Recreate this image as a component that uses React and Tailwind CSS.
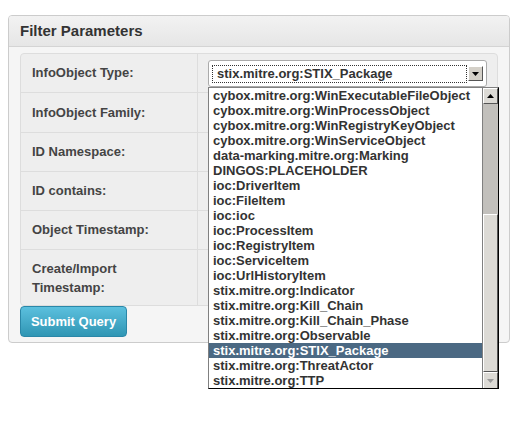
import React from "react";

const options = [
  "cybox.mitre.org:WinExecutableFileObject",
  "cybox.mitre.org:WinProcessObject",
  "cybox.mitre.org:WinRegistryKeyObject",
  "cybox.mitre.org:WinServiceObject",
  "data-marking.mitre.org:Marking",
  "DINGOS:PLACEHOLDER",
  "ioc:DriverItem",
  "ioc:FileItem",
  "ioc:ioc",
  "ioc:ProcessItem",
  "ioc:RegistryItem",
  "ioc:ServiceItem",
  "ioc:UrlHistoryItem",
  "stix.mitre.org:Indicator",
  "stix.mitre.org:Kill_Chain",
  "stix.mitre.org:Kill_Chain_Phase",
  "stix.mitre.org:Observable",
  "stix.mitre.org:STIX_Package",
  "stix.mitre.org:ThreatActor",
  "stix.mitre.org:TTP",
];

const rows = [
  { label: "InfoObject Type:", h: "h-[39px]" },
  { label: "InfoObject Family:", h: "h-[40px]" },
  { label: "ID Namespace:", h: "h-[39px]" },
  { label: "ID contains:", h: "h-[39px]" },
  { label: "Object Timestamp:", h: "h-[39px]" },
];

function Row({ label, h, children }) {
  return (
    <div className={`flex ${h} border-b border-[#dddddd]`}>
      <div className="w-[177px] shrink-0 border-r border-[#dddddd] flex items-center pl-[11px] text-[13px] font-bold text-[#444]">
        {label}
      </div>
      <div className="flex-1 pl-[10px] pt-[6px]">{children}</div>
    </div>
  );
}

export default function App() {
  return (
    <div className="relative w-[519px] h-[432px] bg-white pt-[15px] pl-[8px] font-['Liberation_Sans',Arial,sans-serif]">
      <div className="w-[502px] h-[328px] border border-[#cccccc] rounded-[4px] bg-[#f5f5f5] overflow-hidden">
        <div className="h-[31px] border-b border-[#d4d4d4] bg-gradient-to-b from-[#f2f2f2] to-[#e6e6e6] flex items-center pl-[11px] text-[15px] font-bold text-[#333]">
          Filter Parameters
        </div>
        <div className="pl-[11px] pt-[6px]">
          <div className="w-[478px] border border-[#dddddd] rounded-[4px] bg-[#eeeeee]">
            {rows.map((r, i) => (
              <Row key={i} label={r.label} h={r.h}>
                {i === 0 && (
                  <div className="w-[279px] h-[27px] border border-[#aaaaaa] rounded-[3px] bg-white flex items-center pl-[3px] pr-[3px]">
                    <div className="flex-1 h-[18px] border border-dotted border-[#333] flex items-center pl-[4px] text-[13px] font-bold text-[#333] leading-none">
                      stix.mitre.org:STIX_Package
                    </div>
                    <div className="w-[15px] h-[15px] ml-[1px] bg-[#d4d0c8] border-t border-l border-t-white border-l-white border-r border-b border-r-[#555] border-b-[#555] flex items-center justify-center">
                      <svg width="7" height="4" viewBox="0 0 7 4">
                        <polygon points="0,0 7,0 3.5,4" fill="#000" />
                      </svg>
                    </div>
                  </div>
                )}
              </Row>
            ))}
            <div className="flex h-[55px]">
              <div className="w-[177px] shrink-0 border-r border-[#dddddd] flex items-center pl-[11px] text-[13px] font-bold text-[#444] leading-[19px]">
                Create/Import
                <br />
                Timestamp:
              </div>
              <div className="flex-1" />
            </div>
          </div>
          <button className="w-[107px] h-[31px] rounded-[4px] border border-[#2a87a8] bg-gradient-to-b from-[#5bc0de] to-[#2f96b4] text-white text-[13px] font-bold flex items-center justify-center">
            Submit Query
          </button>
        </div>
      </div>

      <div className="absolute left-[208px] top-[87px] w-[291px] h-[302px] bg-white border-t border-l border-t-[#808080] border-l-[#808080] border-r border-b border-r-black border-b-black flex">
        <div className="flex-1 flex flex-col">
          {options.map((o) => (
            <div
              key={o}
              className={`h-[15px] pl-[4px] text-[13px] font-bold leading-[15px] whitespace-nowrap ${
                o === "stix.mitre.org:STIX_Package"
                  ? "bg-[#4b6983] text-white"
                  : "text-[#333]"
              }`}
            >
              {o}
            </div>
          ))}
        </div>
        <div className="w-[16px] flex flex-col bg-[#c2c0bc] border-l border-[#808080]">
          <div className="h-[16px] bg-[#dcdad5] border-t border-l border-t-white border-l-white border-r border-b border-r-[#555] border-b-[#555] flex items-center justify-center">
            <svg width="7" height="4" viewBox="0 0 7 4">
              <polygon points="0,4 7,4 3.5,0" fill="#000" />
            </svg>
          </div>
          <div className="h-[110px]" />
          <div className="flex-1 bg-[#dcdad5] border-t border-l border-t-white border-l-white border-r border-b border-r-[#555] border-b-[#555]" />
          <div className="h-[16px] bg-[#dcdad5] border-t border-l border-t-white border-l-white border-r border-r-[#555] flex items-center justify-center">
            <svg width="7" height="4" viewBox="0 0 7 4">
              <polygon points="0,0 7,0 3.5,4" fill="#999" />
            </svg>
          </div>
        </div>
      </div>
    </div>
  );
}
